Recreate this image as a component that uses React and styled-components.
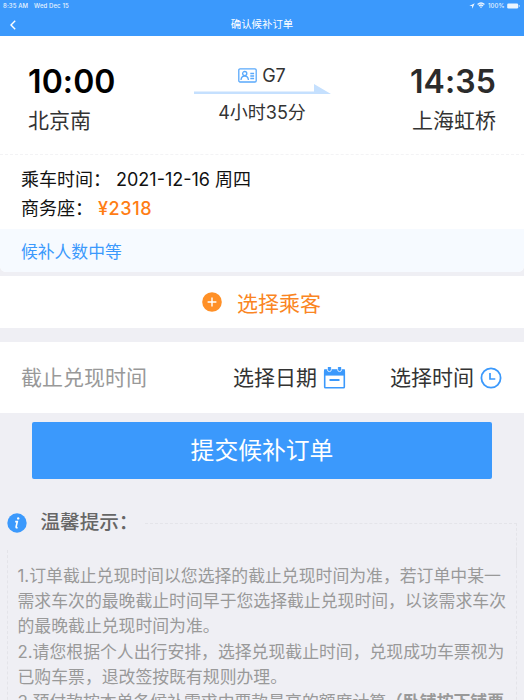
import React from 'react';
import styled, { createGlobalStyle } from 'styled-components';

const BLUE = '#3b99fc';
const ORANGE = '#ff9027';

const GlobalStyle = createGlobalStyle`
  * { box-sizing: border-box; }
  html, body { margin: 0; height: 700px; overflow: hidden; }
  body {
    background: #efeff4;
    font-family: Inter, "Noto Sans CJK SC", sans-serif;
    color: #333;
  }
`;

const Screen = styled.main`
  width: 524px;
  height: 700px;
  overflow: hidden;
  white-space: nowrap;
`;

const Header = styled.header`
  height: 36px;
  background: ${BLUE};
  color: #fff;
`;

const StatusBar = styled.div`
  display: flex;
  align-items: center;
  height: 11px;
  padding: 0 4px 0 3px;
  font-size: 6px;
  line-height: 11px;
  font-weight: 500;
  letter-spacing: 0.1px;
  opacity: 0.9;
`;

const StatusDate = styled.span`
  margin-left: 6px;
  flex: 1;
`;

const StatusIcons = styled.span`
  display: flex;
  align-items: center;
  gap: 2.5px;
`;

const NavBar = styled.nav`
  display: grid;
  grid-template-columns: 40px 1fr 40px;
  align-items: center;
  height: 25px;
`;

const BackButton = styled.button`
  display: flex;
  border: 0;
  padding: 0 0 0 9px;
  background: none;
`;

const NavTitle = styled.h1`
  margin: 0;
  text-align: center;
  font-size: 10.4px;
  line-height: 27px;
  font-weight: 400;
`;

const TripCard = styled.section`
  background: #fff;
  height: 236px;
  border-radius: 0 0 6px 6px;
  overflow: hidden;
`;

const Route = styled.div`
  display: flex;
  justify-content: space-between;
  height: 119px;
  padding: 26px 28px 0;
  border-bottom: 1px dashed #f3f3f5;
`;

const Stop = styled.div`
  width: 130px;
  text-align: ${(p) => (p.$end ? 'right' : 'left')};
`;

const StopTime = styled.div`
  font-size: 32px;
  font-weight: 600;
  line-height: 39px;
  letter-spacing: 0.1px;
  color: ${(p) => (p.$end ? '#2b2b2b' : '#000')};
`;

const StopName = styled.div`
  font-size: 21px;
  line-height: 40px;
`;

const Train = styled.div`
  width: 137px;
  display: flex;
  flex-direction: column;
  align-items: center;
`;

const TrainNumber = styled.div`
  display: flex;
  align-items: center;
  gap: 5px;
  height: 22px;
  padding-top: 5px;
  font-size: 18px;
`;

const TrainArrow = styled.svg`
  display: block;
  width: 137px;
  height: 11px;
`;

const Duration = styled.div`
  font-size: 18px;
  line-height: 36px;
`;

const Details = styled.div`
  height: 74px;
  padding: 10px 21px 0;
  font-size: 18px;
  line-height: 29px;
  color: #111;
`;

const DetailRow = styled.div`
  display: flex;
  gap: 5px;
`;

const Price = styled.span`
  color: #ff7d14;
  font-weight: 500;
  letter-spacing: 0.6px;
`;

const QueueNote = styled.div`
  height: 43px;
  padding-left: 21px;
  background: #f6faff;
  color: ${BLUE};
  font-size: 16.8px;
  line-height: 46px;
`;

const PassengerButton = styled.button`
  display: flex;
  align-items: center;
  width: 100%;
  height: 52px;
  margin: 4px 0 14px;
  padding: 0 0 0 202px;
  gap: 15px;
  border: 0;
  background: #fff;
  color: #fa8523;
  font: inherit;
  font-size: 21px;
`;

const DeadlineRow = styled.section`
  display: flex;
  align-items: center;
  height: 71px;
  padding: 0 22px 0 21px;
  background: #fff;
  font-size: 21px;
  line-height: 31px;
`;

const DeadlineLabel = styled.span`
  width: 212px;
  color: #999;
`;

const Picker = styled.span`
  display: flex;
  align-items: center;
  gap: 6px;
  margin-left: ${(p) => (p.$last ? 'auto' : '0')};
`;

const SubmitButton = styled.button`
  display: block;
  width: 460px;
  height: 57px;
  margin: 9px 0 0 32px;
  padding: 0;
  border: 0;
  border-radius: 2px;
  background: ${BLUE};
  color: #fff;
  font: inherit;
  font-size: 23.8px;
  line-height: 57px;
`;

const Tips = styled.section`
  margin-top: 28px;
`;

const TipsHeading = styled.div`
  display: flex;
  align-items: center;
  height: 31px;
  padding: 0 7px 0 6.5px;
`;

const TipsTitle = styled.h2`
  margin: 0 0 0 14px;
  width: 104px;
  font-size: 19.6px;
  line-height: 31px;
  font-weight: 500;
  color: #666;
`;

const TipsRule = styled.span`
  flex: 1;
  align-self: flex-start;
  height: 42px;
  margin: 16px 0 -27px;
  border: dashed #e4e4e9;
  border-width: 1px 1px 0 0;
`;

const TipsBody = styled.div`
  margin: 12px 7px 0;
  height: 170px;
  padding: 14px 0 0 9.5px;
  border: dashed #e4e4e9;
  border-width: 0 1px;
  font-size: 16.85px;
  line-height: 25.2px;
  color: #999;
`;

const TipLine = styled.div`
  height: 25.2px;
`;

const LocationIcon = () => (
  <svg width="6" height="6" viewBox="0 0 10 10"><path d="M0.5 5 9.5 0.5 5.5 9.5 5 5z" fill="#fff" /></svg>
);

const WifiIcon = () => (
  <svg width="8" height="6.5" viewBox="0 0 14 11">
    <path d="M1 4.2Q7-1 13 4.2M3.4 6.7Q7 3.6 10.6 6.7" fill="none" stroke="#fff" strokeWidth="2.4" />
    <path d="M5 8.3Q7 6.7 9 8.3L7 10.6z" fill="#fff" />
  </svg>
);

const BatteryIcon = () => (
  <svg width="13" height="6" viewBox="0 0 13 6">
    <rect x="0.2" y="0.4" width="11" height="5.2" rx="1.3" fill="#fff" />
    <rect x="11.8" y="2" width="0.9" height="2" rx="0.4" fill="#fff" opacity="0.8" />
  </svg>
);

const BackIcon = () => (
  <svg width="8" height="10" viewBox="0 0 8 10">
    <path d="M6.2 0.8 2 5l4.2 4.2" fill="none" stroke="#fff" strokeWidth="1.4" />
  </svg>
);

const IdCardIcon = () => (
  <svg width="19" height="15" viewBox="0 0 19 15" fill="none" stroke="#5aa9fb" strokeWidth="1.3">
    <rect x="0.8" y="0.8" width="17.4" height="13.2" rx="1.2" />
    <circle cx="6.7" cy="5.6" r="2.1" />
    <path d="M3 12c.2-2.6 1.6-4 3.7-4s3.5 1.4 3.7 4M12.3 5.5h3.8M12.3 8h3.8M12.3 10.5h3.8" />
  </svg>
);

const PlusIcon = () => (
  <svg width="20" height="20" viewBox="0 0 20 20">
    <circle cx="10" cy="10" r="9.8" fill={ORANGE} />
    <path d="M5.6 10h8.8M10 5.6v8.8" stroke="#fff" strokeWidth="1.4" />
  </svg>
);

const CalendarIcon = () => (
  <svg width="23" height="22" viewBox="0 0 23 22">
    <rect x="1.7" y="3.4" width="19.6" height="17.3" rx="0.8" fill="none" stroke={BLUE} strokeWidth="1.6" />
    <path d="M1 2.4h21v6.2H1z" fill={BLUE} />
    <path d="M4.4 0v2.6q0 2 2 2t2-2V0M14.6 0v2.6q0 2 2 2t2-2V0" fill={BLUE} stroke="#fff" strokeWidth="0.8" />
    <path d="M6.5 13h10" stroke={BLUE} strokeWidth="2" />
  </svg>
);

const ClockIcon = () => (
  <svg width="22" height="22" viewBox="0 0 22 22" fill="none" stroke={BLUE}>
    <circle cx="11" cy="11" r="9.6" strokeWidth="1.8" />
    <path d="M10 6v6h5.3" strokeWidth="1.7" />
  </svg>
);

const InfoIcon = () => (
  <svg width="20" height="20" viewBox="0 0 20 20">
    <circle cx="10" cy="10" r="9.7" fill={BLUE} />
    <circle cx="11.2" cy="5.4" r="1.2" fill="#fff" />
    <path d="M8.2 8.6h2.1l-1.2 5.2q-.3 1.4 1.5.8" fill="none" stroke="#fff" strokeWidth="1.6" />
  </svg>
);

const TIPS = [
  '1.订单截止兑现时间以您选择的截止兑现时间为准，若订单中某一',
  '需求车次的最晚截止时间早于您选择截止兑现时间，以该需求车次',
  '的最晚截止兑现时间为准。',
  '2.请您根据个人出行安排，选择兑现截止时间，兑现成功车票视为',
  '已购车票，退改签按既有规则办理。',
];

export default function App() {
  return (
    <Screen>
      <GlobalStyle />
      <Header>
        <StatusBar>
          <span>8:35 AM</span>
          <StatusDate>Wed Dec 15</StatusDate>
          <StatusIcons>
            <LocationIcon />
            <WifiIcon />
            <span>100%</span>
            <BatteryIcon />
          </StatusIcons>
        </StatusBar>
        <NavBar>
          <BackButton aria-label="返回"><BackIcon /></BackButton>
          <NavTitle>确认候补订单</NavTitle>
        </NavBar>
      </Header>

      <TripCard>
        <Route>
          <Stop>
            <StopTime>10:00</StopTime>
            <StopName>北京南</StopName>
          </Stop>
          <Train>
            <TrainNumber><IdCardIcon />G7</TrainNumber>
            <TrainArrow viewBox="0 0 137 11">
              <path d="M0 7.5h120V0L137 10H0z" fill="#c5e0fe" />
            </TrainArrow>
            <Duration>4小时35分</Duration>
          </Train>
          <Stop $end>
            <StopTime $end>14:35</StopTime>
            <StopName>上海虹桥</StopName>
          </Stop>
        </Route>
        <Details>
          <DetailRow><span>乘车时间：</span><span>2021-12-16 周四</span></DetailRow>
          <DetailRow><span>商务座：</span><Price>¥2318</Price></DetailRow>
        </Details>
        <QueueNote>候补人数中等</QueueNote>
      </TripCard>

      <PassengerButton><PlusIcon />选择乘客</PassengerButton>

      <DeadlineRow>
        <DeadlineLabel>截止兑现时间</DeadlineLabel>
        <Picker><span>选择日期</span><CalendarIcon /></Picker>
        <Picker $last><span>选择时间</span><ClockIcon /></Picker>
      </DeadlineRow>

      <SubmitButton>提交候补订单</SubmitButton>

      <Tips>
        <TipsHeading>
          <InfoIcon />
          <TipsTitle>温馨提示：</TipsTitle>
          <TipsRule />
        </TipsHeading>
        <TipsBody>
          {TIPS.map((line) => <TipLine key={line}>{line}</TipLine>)}
          <TipLine>3.预付款按本单各候补需求中票款最高的额度计算<b>（卧铺按下铺票</b></TipLine>
        </TipsBody>
      </Tips>
    </Screen>
  );
}
